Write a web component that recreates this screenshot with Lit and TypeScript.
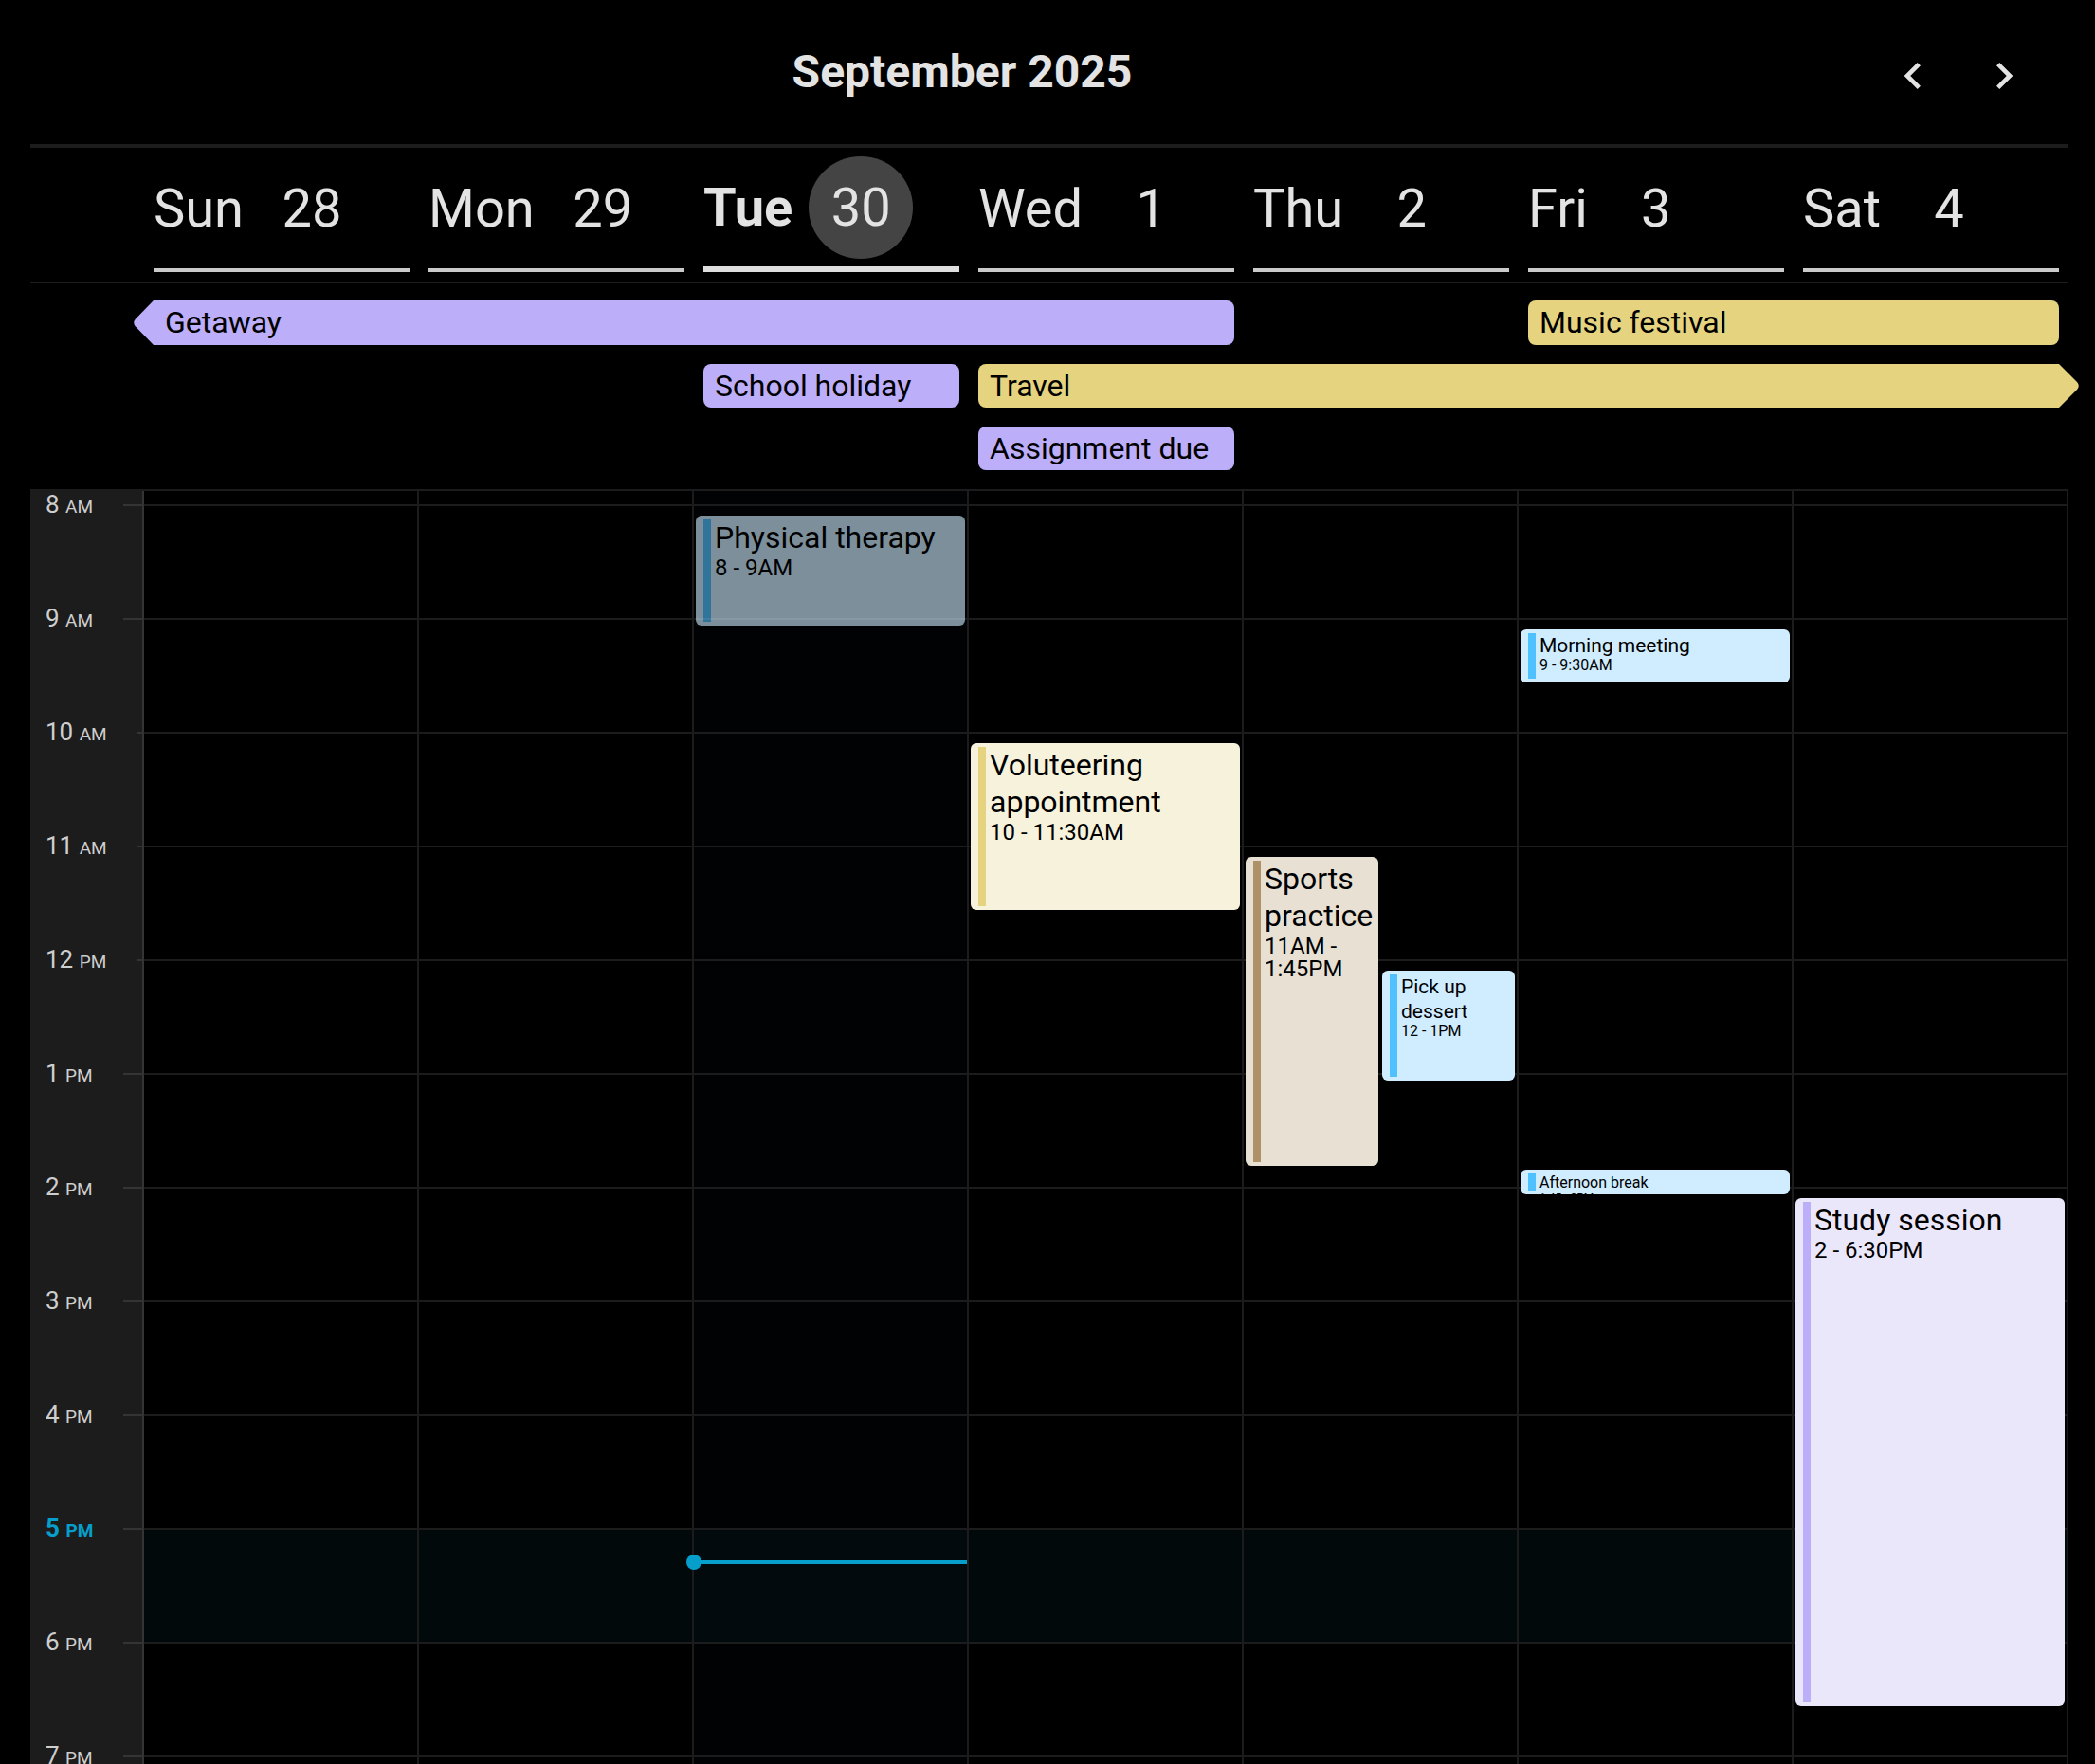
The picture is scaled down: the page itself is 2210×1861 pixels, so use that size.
import { LitElement, html, css, svg, nothing } from "lit";
import { customElement, property } from "lit/decorators.js";
import { classMap } from "lit/directives/class-map.js";
import { styleMap } from "lit/directives/style-map.js";

type Tone = "violet" | "gold" | "sky" | "tan";
type Size = "large" | "medium" | "small";

interface Day {
  name: string;
  date: number;
  today?: boolean;
}

interface AllDayEvent {
  title: string;
  first: number;
  span: number;
  row: number;
  tone: Tone;
  before?: boolean;
  after?: boolean;
}

interface TimedEvent {
  title: string;
  time: string;
  day: number;
  start: number;
  end: number;
  tone: Tone;
  size: Size;
  lane?: number;
  lanes?: number;
  past?: boolean;
}

const HOUR_HEIGHT = 120;
const FIRST_HOUR = 8;
const NOW = 17.2833;

const DAYS: Day[] = [
  { name: "Sun", date: 28 },
  { name: "Mon", date: 29 },
  { name: "Tue", date: 30, today: true },
  { name: "Wed", date: 1 },
  { name: "Thu", date: 2 },
  { name: "Fri", date: 3 },
  { name: "Sat", date: 4 },
];

const ALL_DAY: AllDayEvent[] = [
  { title: "Getaway", first: 0, span: 4, row: 0, tone: "violet", before: true },
  { title: "Music festival", first: 5, span: 2, row: 0, tone: "gold" },
  { title: "School holiday", first: 2, span: 1, row: 1, tone: "violet" },
  { title: "Travel", first: 3, span: 4, row: 1, tone: "gold", after: true },
  { title: "Assignment due", first: 3, span: 1, row: 2, tone: "violet" },
];

const TIMED: TimedEvent[] = [
  { title: "Physical therapy", time: "8 - 9AM", day: 2, start: 8, end: 9, tone: "sky", size: "large", past: true },
  { title: "Voluteering appointment", time: "10 - 11:30AM", day: 3, start: 10, end: 11.5, tone: "gold", size: "large" },
  { title: "Sports practice", time: "11AM - 1:45PM", day: 4, start: 11, end: 13.75, tone: "tan", size: "large", lane: 0, lanes: 2 },
  { title: "Pick up dessert", time: "12 - 1PM", day: 4, start: 12, end: 13, tone: "sky", size: "medium", lane: 1, lanes: 2 },
  { title: "Morning meeting", time: "9 - 9:30AM", day: 5, start: 9, end: 9.5, tone: "sky", size: "medium" },
  { title: "Afternoon break", time: "1:45 - 2PM", day: 5, start: 13.75, end: 14, tone: "sky", size: "small" },
  { title: "Study session", time: "2 - 6:30PM", day: 6, start: 14, end: 18.5, tone: "violet", size: "large" },
];

const HOURS = Array.from({ length: 12 }, (_, i) => FIRST_HOUR + i);

const tones = css`
  .violet { --tone: #bdaefa; --tint: #ebe7fb; }
  .gold { --tone: #e5d380; --tint: #f7f2dc; }
  .sky { --tone: #50c1ff; --tint: #cfedff; }
  .tan { --tone: #af9168; --tint: #e7e0d3; }
`;

@customElement("calendar-header")
export class CalendarHeader extends LitElement {
  @property() heading = "";

  static styles = css`
    :host {
      display: flex;
      align-items: center;
      height: 152px;
      padding: 0 20px;
      border-bottom: 4px solid #1c1c1c;
      color: #e3e3e3;
    }
    .heading {
      flex: 1;
      margin: 0;
      padding-left: 8px;
      font-size: 48px;
      font-weight: 700;
      line-height: 56px;
      text-align: center;
    }
    .nav { display: flex; padding-top: 8px; }
    .step {
      width: 96px;
      height: 96px;
      padding: 20px;
      border: 0;
      background: none;
      color: inherit;
      cursor: pointer;
    }
    .icon { display: block; width: 56px; height: 56px; fill: currentColor; }
  `;

  render() {
    return html`
      <h1 class="heading">${this.heading}</h1>
      <div class="nav">
        <button class="step" aria-label="Previous week">
          <svg class="icon" viewBox="0 0 24 24">${svg`<path d="M15.41 7.41 14 6l-6 6 6 6 1.41-1.41L10.83 12z" />`}</svg>
        </button>
        <button class="step" aria-label="Next week">
          <svg class="icon" viewBox="0 0 24 24">${svg`<path d="M8.59 16.59 10 18l6-6-6-6-1.41 1.41L13.17 12z" />`}</svg>
        </button>
      </div>
    `;
  }
}

@customElement("day-strip")
export class DayStrip extends LitElement {
  @property({ attribute: false }) days: Day[] = [];

  static styles = css`
    :host {
      display: grid;
      grid-template-columns: repeat(7, minmax(0, 1fr));
      padding: 0 0 10px 120px;
      border-bottom: 2px solid #1c1c1c;
      color: #e3e3e3;
    }
    .day {
      display: flex;
      align-items: center;
      gap: 17px;
      margin: 0 10px;
      padding: 10px 0 9px;
      border-bottom: 4px solid #cacaca;
      font-size: 56px;
      line-height: 108px;
    }
    .date { width: 110px; border-radius: 50%; text-align: center; }
    .today { padding: 9px 0 8px; border-bottom: 6px solid #dedede; }
    .today .name { font-weight: 700; }
    .today .date { background: #444; }
  `;

  render() {
    return this.days.map(
      (day) => html`
        <div class=${classMap({ day: true, today: !!day.today })}>
          <span class="name">${day.name}</span>
          <span class="date">${day.date}</span>
        </div>
      `,
    );
  }
}

@customElement("all-day-events")
export class AllDayEvents extends LitElement {
  @property({ attribute: false }) events: AllDayEvent[] = [];

  static styles = [
    tones,
    css`
      :host {
        display: grid;
        grid-template-columns: repeat(7, minmax(0, 1fr));
        grid-template-rows: 47px 46px 46px;
        row-gap: 20px;
        padding: 18px 0 20px 120px;
        border-bottom: 2px solid #1c1c1c;
      }
      .bar {
        position: relative;
        margin: 0 10px;
        padding: 0 12px;
        border-radius: 8px;
        background: var(--tone);
        color: #000;
        font-size: 32px;
        line-height: 46px;
        white-space: nowrap;
      }
      .before { border-top-left-radius: 0; border-bottom-left-radius: 0; }
      .after { border-top-right-radius: 0; border-bottom-right-radius: 0; }
      .tip {
        position: absolute;
        top: 0;
        width: 21px;
        height: 100%;
        fill: var(--tone);
      }
      .before .tip { right: 100%; }
      .after .tip { left: 100%; }
    `,
  ];

  render() {
    return this.events.map((event) => {
      const place = {
        gridColumn: `${event.first + 1} / span ${event.span}`,
        gridRow: `${event.row + 1}`,
      };
      return html`
        <div
          class=${classMap({ bar: true, [event.tone]: true, before: !!event.before, after: !!event.after })}
          style=${styleMap(place)}
        >
          ${event.title}
          ${event.before
            ? html`<svg class="tip" viewBox="0 0 21 46" preserveAspectRatio="none"><path d="M21 0 2 19Q-1.500 23 2 27L21 46Z" /></svg>`
            : nothing}
          ${event.after
            ? html`<svg class="tip" viewBox="0 0 21 46" preserveAspectRatio="none"><path d="M0 0 19 19Q22.500 23 19 27L0 46Z" /></svg>`
            : nothing}
        </div>
      `;
    });
  }
}

@customElement("timed-event")
export class TimedEventCard extends LitElement {
  @property({ attribute: false }) event!: TimedEvent;

  static styles = [
    tones,
    css`
      :host { display: block; height: 100%; }
      .card {
        display: flex;
        gap: 4px;
        box-sizing: border-box;
        height: 100%;
        padding: 4px 0 4px 8px;
        border-radius: 6px;
        background: var(--tint);
        color: #000;
        overflow: hidden;
      }
      .past { opacity: 0.6; }
      .stripe { flex: none; width: 8px; background: var(--tone); }
      .title, .time { margin: 0; font-weight: 400; }
      .large .title { font-size: 32px; line-height: 39px; }
      .large .time { font-size: 24px; line-height: 24px; }
      .medium .title { font-size: 21px; line-height: 26px; }
      .medium .time { font-size: 16px; line-height: 16px; }
      .small .title { font-size: 16px; line-height: 19px; }
      .small .time { font-size: 12px; line-height: 14px; }
    `,
  ];

  render() {
    const { title, time, tone, size, past } = this.event;
    return html`
      <article class=${classMap({ card: true, [tone]: true, [size]: true, past: !!past })}>
        <div class="stripe"></div>
        <div class="text">
          <h2 class="title">${title}</h2>
          <p class="time">${time}</p>
        </div>
      </article>
    `;
  }
}

@customElement("time-grid")
export class TimeGrid extends LitElement {
  @property({ attribute: false }) days: Day[] = [];
  @property({ attribute: false }) events: TimedEvent[] = [];
  @property({ type: Number }) now = 0;

  static styles = css`
    :host {
      display: grid;
      grid-template-columns: 120px minmax(0, 1fr);
      overflow: hidden;
    }
    .gutter {
      padding-top: 14px;
      border-right: 2px solid #343434;
      background: #1c1c1c;
      color: #cecece;
    }
    .hour { display: flex; align-items: flex-start; gap: 32px; height: 120px; padding-left: 16px; }
    .label { margin-top: -15px; font-size: 26px; line-height: 30px; white-space: nowrap; }
    .half { font-size: 19px; }
    .tick { flex: 1; height: 2px; background: #343434; }
    .hour.current .label { color: #069fcb; font-weight: 700; }
    .canvas { position: relative; }
    .rows { padding-top: 14px; }
    .row { box-sizing: border-box; height: 120px; border-top: 2px solid #1c1c1c; }
    .row.current { background: #02090b; }
    .columns {
      position: absolute;
      inset: 0;
      display: grid;
      grid-template-columns: repeat(7, minmax(0, 1fr));
    }
    .column { position: relative; border-right: 2px solid #1c1c1c; }
    .column.today { background: rgba(20, 50, 80, 0.04); }
    .slot { position: absolute; box-sizing: border-box; padding: 2px; }
    .now { position: absolute; left: 0; right: 0; height: 4px; background: #069fcb; }
    .dot {
      position: absolute;
      top: -6px;
      left: -8px;
      width: 16px;
      height: 16px;
      border-radius: 50%;
      background: #069fcb;
    }
  `;

  private offset(hour: number) {
    return (hour - FIRST_HOUR) * HOUR_HEIGHT + 24;
  }

  private renderEvent(event: TimedEvent) {
    const lanes = event.lanes ?? 1;
    const box = {
      top: `${this.offset(event.start)}px`,
      height: `${(event.end - event.start) * HOUR_HEIGHT}px`,
      left: `${((event.lane ?? 0) * 100) / lanes}%`,
      width: `${100 / lanes}%`,
    };
    return html`<div class="slot" style=${styleMap(box)}><timed-event .event=${event}></timed-event></div>`;
  }

  render() {
    const current = Math.floor(this.now);
    const nowTop = Math.round((this.now - FIRST_HOUR) * HOUR_HEIGHT) + 14;
    return html`
      <div class="gutter">
        ${HOURS.map(
          (hour) => html`
            <div class=${classMap({ hour: true, current: hour === current })}>
              <span class="label">${hour > 12 ? hour - 12 : hour} <span class="half">${hour < 12 ? "AM" : "PM"}</span></span>
              <span class="tick"></span>
            </div>
          `,
        )}
      </div>
      <div class="canvas">
        <div class="rows">
          ${HOURS.map((hour) => html`<div class=${classMap({ row: true, current: hour === current })}></div>`)}
        </div>
        <div class="columns">
          ${this.days.map(
            (day, index) => html`
              <div class=${classMap({ column: true, today: !!day.today })}>
                ${this.events.filter((event) => event.day === index).map((event) => this.renderEvent(event))}
                ${day.today
                  ? html`<div class="now" style=${styleMap({ top: `${nowTop}px` })}><span class="dot"></span></div>`
                  : nothing}
              </div>
            `,
          )}
        </div>
      </div>
    `;
  }
}

@customElement("app-root")
export class AppRoot extends LitElement {
  static styles = css`
    :host {
      display: flex;
      flex-direction: column;
      box-sizing: border-box;
      height: 100vh;
      padding: 0 28px 0 32px;
      overflow: hidden;
      background: #000;
      font-family: Roboto, "Liberation Sans", sans-serif;
    }
    .grid { flex: 1; min-height: 0; }
  `;

  render() {
    return html`
      <calendar-header heading="September 2025"></calendar-header>
      <day-strip .days=${DAYS}></day-strip>
      <all-day-events .events=${ALL_DAY}></all-day-events>
      <time-grid class="grid" .days=${DAYS} .events=${TIMED} .now=${NOW}></time-grid>
    `;
  }
}
